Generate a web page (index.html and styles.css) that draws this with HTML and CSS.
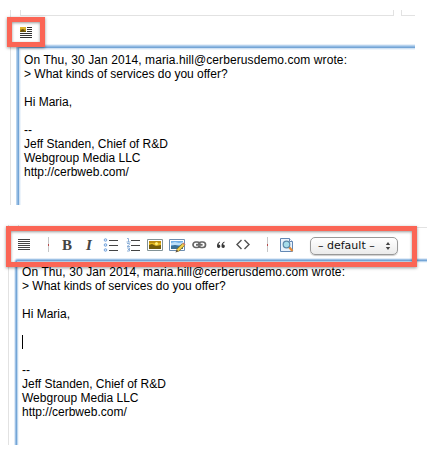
FILE: index.html
```
<!DOCTYPE html>
<html lang="en">
<head>
<meta charset="utf-8">
<title>Editor</title>
<link rel="stylesheet" href="styles.css">
</head>
<body>
<section class="panel plain">
  <div class="fields"><div class="field"></div><div class="field last"></div></div>
  <div class="toolbar">
    <svg class="icon" width="14" height="14" viewBox="0 0 14 14"><path d="M0 2h6v5H0z" fill="#b99516"/><path d="M0 2h6v2H0z" fill="#dcb52c"/><path d="M1 5l2-1 2 2 1 0v1H0z" fill="#67500b"/><path d="M7 2.5h5M7 4.5h5M7 6.5h5M0 8.5h12M0 10.5h12M0 12.5h12" stroke="#333"/></svg>
    <div class="callout small"></div>
  </div>
  <div class="editor"><span class="quote">On Thu, 30 Jan 2014, maria.hill@cerberusdemo.com wrote:</span>
&gt; What kinds of services do you offer?

Hi Maria,

--
Jeff Standen, Chief of R&amp;D
Webgroup Media LLC
http://cerbweb.com/</div>
</section>

<section class="panel rich">
  <div class="topline"></div>
  <div class="toolbar">
    <svg class="icon" viewBox="0 0 22 22"><path d="M5 5.5h12M5 7.5h12M5 9.5h12M5 11.5h12M5 13.5h12M5 15.5h12" stroke="#444"/></svg>
    <span class="sep first"></span>
    <span class="letter bold">B</span>
    <span class="letter italic">I</span>
    <svg class="icon" viewBox="0 0 22 22"><g fill="#d6e7fb" stroke="#78a5dc"><circle cx="5.5" cy="6" r="1.3"/><circle cx="5.5" cy="11" r="1.3"/><circle cx="5.5" cy="16" r="1.3"/></g><path d="M9 6.5h9M9 11.5h9M9 16.5h9" stroke="#444"/></svg>
    <svg class="icon" viewBox="0 0 22 22"><path d="M5 4.5h1.5V8M4.5 8h4M5 9.5h2.5v1L5 12.5h3M5 14h2.5v1.5H6h1.5V17H5" fill="none" stroke="#82a8d4" stroke-width=".9"/><path d="M9 6.5h9M9 11.5h9M9 16.5h9" stroke="#444"/></svg>
    <svg class="icon" viewBox="0 0 22 22"><path d="M3.5 5.5h15v11h-15z" fill="#fff" stroke="#829295"/><path d="M5 7h12v8H5z" fill="#e5b920"/><path d="M5 7h12v2H5z" fill="#bd8d10"/><circle cx="12.5" cy="9.5" r="1.5" fill="#fff07a"/><path d="M5 11l3-1 4 2 5-1v4H5z" fill="#745c0b"/></svg>
    <svg class="icon" viewBox="0 0 22 22"><path d="M3.5 5.5h15v11h-15z" fill="#fff" stroke="#6d8daf"/><path d="M5 7h12v8H5z" fill="#72b0e7"/><path d="M5 9l4-1 4 1 4-1v3H5z" fill="#bee0f8"/><path d="M5 12l4-1 4 1 4-1v4H5z" fill="#3b7196"/><path d="M11.5 16.5l6-6" stroke="#8d741d" stroke-width="3.4"/><path d="M11.5 16.5l6-6" stroke="#f4d451" stroke-width="2"/><path d="M9.5 18.5l1-3 2 2z" fill="#645339"/><path d="M17 9l2 2" stroke="#d57962" stroke-width="1.5"/></svg>
    <svg class="icon" viewBox="0 0 22 22"><g fill="none" stroke="#666" stroke-width="1.7"><rect x="5" y="8" width="7" height="5.5" rx="2.7"/><rect x="10.5" y="8" width="7" height="5.5" rx="2.7"/></g><path d="M8 10.8h6.5" stroke="#999" stroke-width="2"/><path d="M8 10.8h6.5" stroke="#444" stroke-width=".8"/></svg>
    <svg class="icon" viewBox="0 0 22 22"><path d="M10 8.5Q8.5 9.2 8.6 10.5A1.7 1.7 0 1 1 7 11.8Q7 8.7 10 7.5zM14.5 8.5Q13 9.2 13.1 10.5a1.7 1.7 0 1 1-1.6 1.3Q11.5 8.7 14.5 7.5z" fill="#383838"/></svg>
    <svg class="icon" viewBox="0 0 22 22"><path d="M9.5 6L5 10.5 9.5 15M12.5 6l4.5 4.5-4.5 4.5" fill="none" stroke="#505050" stroke-width="1.4"/></svg>
    <span class="sep"></span>
    <svg class="icon" viewBox="0 0 22 22"><path d="M4.5 4.5h9l3 3v10h-12z" fill="#eaf3fc" stroke="#6388b4"/><path d="M13.5 4.5v3h3" fill="#fff" stroke="#6388b4"/><path d="M13 13l3.5 4" stroke="#e58b38" stroke-width="2.2"/><circle cx="10.5" cy="10.5" r="3.3" fill="#a7ddea" stroke="#5c88a7" stroke-width="1.2"/></svg>
    <span class="select"><span>– default –</span><svg width="6" height="8" viewBox="0 0 6 8"><path d="M3 0l2.2 3H.8zM3 8L.8 5h4.4z" fill="#444"/></svg></span>
    <div class="callout large"></div>
  </div>
  <div class="editor"><span class="quote">On Thu, 30 Jan 2014, maria.hill@cerberusdemo.com wrote:</span>
&gt; What kinds of services do you offer?

Hi Maria,

<span class="caret"></span>

--
Jeff Standen, Chief of R&amp;D
Webgroup Media LLC
http://cerbweb.com/</div>
</section>
</body>
</html>
```
FILE: styles.css
```
* { box-sizing: border-box; }
body { margin: 0; padding-top: 10px; width: 427px; height: 455px; overflow: hidden; background: #fff; color: #000; font: 12px/14px "Liberation Sans", Arial, sans-serif; }
.panel { display: flex; flex-direction: column; border-left: 1px solid #e2e2e2; }
.plain { width: 405px; height: 195px; margin-left: 10px; }
.rich { width: 419px; height: 220px; margin: 20px 0 0 8px; }
.fields { display: flex; gap: 7px; height: 6px; padding-left: 9px; flex: none; }
.field { width: 374px; border: solid #e2e2e2; border-width: 0 1px 1px; }
.field.last { flex: 1; width: auto; border-right: 0; }
.toolbar { position: relative; display: flex; flex: none; }
.plain .toolbar { height: 31px; padding: 9px 0 0 9px; }
.topline { height: 3px; flex: none; background: linear-gradient(#e2e2e2, #e2e2e2) 0 100% / 100% 1px no-repeat, linear-gradient(#e2e2e2, #e2e2e2) 9px 0 / 1px 3px no-repeat; }
.rich .toolbar { height: 32px; padding: 6px 0 0 4px; }
.icon { flex: none; }
.rich .icon { width: 22px; height: 22px; }
.editor { flex: 1; margin-left: 7px; white-space: pre; border: solid #74a5d6; border-width: 1px 0 0 1px; border-top-left-radius: 2px; padding: 4px 0 0 5px; background: #fff; box-shadow: 0 0 0 1px #9dc1e5, 0 0 0 2px #e0ebf7, inset 1px 1px #bcd6ee, inset 2px 2px #f0f6fb; clip-path: inset(-3px 0 0 -3px); }
.plain .editor { padding-top: 5px; box-shadow: 0 0 0 1px #91b9e1, 0 0 0 2px #b7d3ee, 0 0 0 3px #e8f0f9, inset 1px 1px #cfe1f3, inset 2px 2px #edf4fb; clip-path: inset(-3px 0 0 -2px); }
.quote { letter-spacing: .09px; }
.sep { width: 22px; height: 15px; margin-top: 3px; background: linear-gradient(#b84b4b, #b84b4b) 13px 7px / 1px 2px no-repeat, linear-gradient(#c6c6c6, #c6c6c6) 13px 0 / 1px 15px no-repeat; flex: none; }
.sep.first { width: 21px; }
.letter { width: 22px; height: 22px; font: bold 15px/22px "Liberation Serif", serif; color: #444; text-align: center; flex: none; }
.italic { font-style: italic; }
.select { display: flex; align-items: center; justify-content: space-between; width: 88px; height: 18px; margin: 3px 0 0 12px; padding: 0 6px 0 7px; border: 1px solid #999; border-radius: 5px; background: linear-gradient(#fff, #ebebeb); box-shadow: 0 1px 1px #ccc; font: 11px/16px "DejaVu Sans", sans-serif; color: #111; flex: none; }
.callout { position: absolute; border: 5px solid #fb6555; box-shadow: 0 1px 3px rgba(0, 0, 0, .4), inset 0 1px 3px rgba(0, 0, 0, .4); z-index: 1; }
.small { left: -4px; top: 1px; width: 38px; height: 30px; }
.large { left: -3px; top: -2px; width: 411px; height: 41px; }
.caret { display: inline-block; width: 1px; height: 14px; background: #000; vertical-align: top; }
```
